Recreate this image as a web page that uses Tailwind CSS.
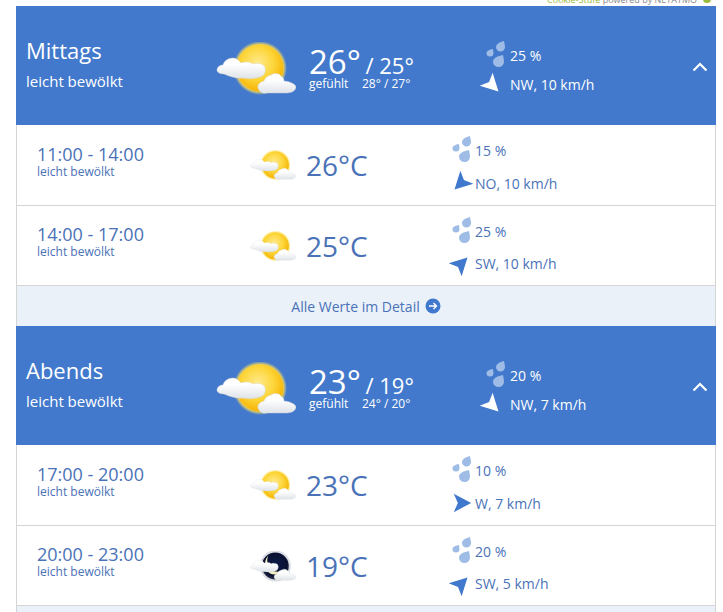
<!DOCTYPE html>
<html lang="de">
<head>
    <meta charset="UTF-8">
    <title>Wetter</title>
    <script src="https://cdn.jsdelivr.net/npm/@tailwindcss/browser@4"></script>
</head>
<body class="bg-white font-['Open_Sans',sans-serif] text-[#4a72b8] w-[723px] h-[612px] overflow-hidden relative">
    <svg width="0" height="0" class="absolute">
        <defs>
            <radialGradient id="sunFill" cx="45%" cy="40%" r="62%">
                <stop offset="0" stop-color="#ffe98f"/>
                <stop offset="0.55" stop-color="#fdd63a"/>
                <stop offset="1" stop-color="#f4b000"/>
            </radialGradient>
            <radialGradient id="sunGlow" cx="50%" cy="50%" r="50%">
                <stop offset="0.86" stop-color="#ffe15a" stop-opacity=".9"/>
                <stop offset="1" stop-color="#ffe15a" stop-opacity="0"/>
            </radialGradient>
            <radialGradient id="moonSky" cx="50%" cy="45%" r="55%">
                <stop offset="0" stop-color="#0c1a4a"/>
                <stop offset="0.8" stop-color="#0a1030"/>
                <stop offset="1" stop-color="#30364d"/>
            </radialGradient>
            <linearGradient id="cloudFill" x1="0" y1="0" x2="0" y2="1">
                <stop offset="0.3" stop-color="#ffffff"/>
                <stop offset="1" stop-color="#dfe3e8"/>
            </linearGradient>
            <symbol id="cloudLeft" viewBox="0 0 80 54">
                <path d="M1 28c0-3 3-5 6-5 1-4 5-7 10-7 3 0 6 2 8 5 5-2 9-1 12 1 4-1 11-1 12 4 1 4-1 8-5 9-6 2-12 2-18 1-6 1-13-2-18-4-3 0-7-1-7-4z" fill="url(#cloudFill)" stroke="#cfd4da" stroke-width=".4"/>
                <path d="M42 46c-1-3 2-6 6-7 1-3 3-5 7-6 3-2 8-2 10 1 2 1 3 3 3 5 4 0 12 3 12 6s-4 6-9 6H51c-4 1-8-1-9-5z" fill="url(#cloudFill)" stroke="#cfd4da" stroke-width=".4"/>
            </symbol>
            <symbol id="cloudSun" viewBox="0 0 80 54">
                <circle cx="44" cy="26" r="27" fill="url(#sunGlow)"/>
                <circle cx="44" cy="26" r="23.500" fill="url(#sunFill)"/>
                <use href="#cloudLeft" width="80" height="54"/>
            </symbol>
            <symbol id="cloudMoon" viewBox="0 0 80 54">
                <circle cx="44" cy="26" r="27" fill="#8c93a8" opacity=".3"/>
                <circle cx="44" cy="26" r="23.500" fill="url(#moonSky)"/>
                <path d="M32 8c-4 8-2 20 7 26 6 3 12 3 17 0-7 10-21 9-27-1-5-8-3-19 3-25z" fill="#f2eec0"/>
                <use href="#cloudLeft" width="80" height="54"/>
            </symbol>
            <symbol id="drops" viewBox="0 0 20 26">
                <path d="M18 0c.5 3 1 4.500 1 6a4.500 4.500 0 0 1-9 0c0-3 4-5 8-6z"/>
                <path d="M7 8c0 2 .5 3 .5 4a3.500 3.500 0 0 1-7 0c0-2 3-3.500 6.500-4z"/>
                <path d="M17 14c.5 3 1 4.500 1 6.500a5.500 5.500 0 0 1-11 0c0-3.500 5-5.500 10-6.500z"/>
            </symbol>
            <symbol id="arrow" viewBox="-12 -12 24 24">
                <path d="M-9 -10L10 0L-9 10L-4.500 0z"/>
            </symbol>
        </defs>
    </svg>

    <p class="absolute right-[26px] -top-[7px] text-[9px] leading-[13px] text-[#8a8a8a] whitespace-nowrap"><span class="text-[#9aba3a]">Cookie-Stufe</span> powered by NETATMO</p>
    <span class="absolute right-[12px] -top-[5px] w-2 h-2 rounded-full bg-[#9aba3a]"></span>

    <main class="w-[700px] ml-4 mt-1.5">
        <!-- Mittags -->
        <section>
            <header class="h-[119px] bg-[#4279cc] text-white flex items-center relative">
                <div class="w-[200px] pl-2.5 -mt-[4px] shrink-0">
                    <h2 class="text-[22px] leading-[28px] mb-[7px]">Mittags</h2>
                    <p class="text-[15px] leading-5">leicht bewölkt</p>
                </div>
                <svg class="w-[80px] h-[54px] mt-[7px] shrink-0"><use href="#cloudSun"/></svg>
                <div class="w-[184px] pl-[13px] shrink-0 mt-[4px]">
                    <p class="text-[33px] leading-[34px] whitespace-nowrap">26° <span class="text-[22px] -ml-[4px]">/ 25°</span></p>
                    <p class="text-[12px] leading-[13px] -mt-[5px] flex"><span class="w-[53px]">gefühlt</span><span>28° / 27°</span></p>
                </div>
                <div class="text-[14px] flex flex-col gap-[5px] mt-[6px] w-[150px]">
                    <p class="grid grid-cols-[30px_1fr] items-center h-[27px]"><svg class="w-[20px] h-[26px] ml-[6px] -mt-[3px] fill-[#9ebce6]"><use href="#drops"/></svg><span>25 %</span></p>
                    <p class="grid grid-cols-[30px_1fr] items-center h-[22px]"><svg class="w-[22px] h-[22px] ml-[1px] fill-white rotate-[45deg]"><use href="#arrow"/></svg><span>NW, 10 km/h</span></p>
                </div>
                <svg class="absolute right-[8px] top-[56px] w-4 h-[10px] stroke-white fill-none" viewBox="0 0 16 10"><path d="M1.500 8.500L8 2l6.500 6.500" stroke-width="2.200"/></svg>
            </header>
            <div class="border-x border-[#d5d5d5]">
                <article class="h-[81px] border-b border-[#d5d5d5] flex items-center">
                    <div class="w-[233px] pl-5 -mt-[8px] shrink-0">
                        <p class="text-[18px] leading-[20px]">11:00 - 14:00</p>
                        <p class="text-[12px] leading-[14px] mt-[1px]">leicht bewölkt</p>
                    </div>
                    <svg class="w-[46px] h-[31px] mt-[1px] shrink-0"><use href="#cloudSun"/></svg>
                    <p class="w-[154px] pl-[10px] text-[28px] leading-8 shrink-0">26°C</p>
                    <div class="text-[14px] mt-[1px]">
                        <p class="grid grid-cols-[25px_1fr] items-center h-[27px] mb-[8px]"><svg class="w-[20px] h-[26px] ml-[2px] -mt-[3px] fill-[#9ebce6]"><use href="#drops"/></svg><span>15 %</span></p>
                        <p class="grid grid-cols-[25px_1fr] items-center h-[22px]"><svg class="w-[22px] h-[22px] fill-[#3f78cc] rotate-[135deg]"><use href="#arrow"/></svg><span>NO, 10 km/h</span></p>
                    </div>
                </article>
                <article class="h-[80px] border-b border-[#d5d5d5] flex items-center">
                    <div class="w-[233px] pl-5 -mt-[8px] shrink-0">
                        <p class="text-[18px] leading-[20px]">14:00 - 17:00</p>
                        <p class="text-[12px] leading-[14px] mt-[1px]">leicht bewölkt</p>
                    </div>
                    <svg class="w-[46px] h-[31px] mt-[1px] shrink-0"><use href="#cloudSun"/></svg>
                    <p class="w-[154px] pl-[10px] text-[28px] leading-8 shrink-0">25°C</p>
                    <div class="text-[14px] mt-[1px]">
                        <p class="grid grid-cols-[25px_1fr] items-center h-[27px] mb-[8px]"><svg class="w-[20px] h-[26px] ml-[2px] -mt-[3px] fill-[#9ebce6]"><use href="#drops"/></svg><span>25 %</span></p>
                        <p class="grid grid-cols-[25px_1fr] items-center h-[22px]"><svg class="w-[22px] h-[22px] fill-[#3f78cc] -rotate-[45deg]"><use href="#arrow"/></svg><span>SW, 10 km/h</span></p>
                    </div>
                </article>
                <a class="h-[40px] bg-[#eaf1f8] flex items-center justify-center gap-[5px] text-[14px]">Alle Werte im Detail
                    <svg class="w-4 h-4" viewBox="0 0 16 16"><circle cx="8" cy="8" r="7.500" fill="#3f78cc"/><path d="M4 8h7.500M8.500 5l3 3-3 3" fill="none" stroke="#fff" stroke-width="1.400"/></svg>
                </a>
            </div>
        </section>
        <!-- Abends -->
        <section>
            <header class="h-[119px] bg-[#4279cc] text-white flex items-center relative">
                <div class="w-[200px] pl-2.5 -mt-[4px] shrink-0">
                    <h2 class="text-[22px] leading-[28px] mb-[7px]">Abends</h2>
                    <p class="text-[15px] leading-5">leicht bewölkt</p>
                </div>
                <svg class="w-[80px] h-[54px] mt-[7px] shrink-0"><use href="#cloudSun"/></svg>
                <div class="w-[184px] pl-[13px] shrink-0 mt-[4px]">
                    <p class="text-[33px] leading-[34px] whitespace-nowrap">23° <span class="text-[22px] -ml-[4px]">/ 19°</span></p>
                    <p class="text-[12px] leading-[13px] -mt-[5px] flex"><span class="w-[53px]">gefühlt</span><span>24° / 20°</span></p>
                </div>
                <div class="text-[14px] flex flex-col gap-[5px] mt-[6px] w-[150px]">
                    <p class="grid grid-cols-[30px_1fr] items-center h-[27px]"><svg class="w-[20px] h-[26px] ml-[6px] -mt-[3px] fill-[#9ebce6]"><use href="#drops"/></svg><span>20 %</span></p>
                    <p class="grid grid-cols-[30px_1fr] items-center h-[22px]"><svg class="w-[22px] h-[22px] ml-[1px] fill-white rotate-[45deg]"><use href="#arrow"/></svg><span>NW, 7 km/h</span></p>
                </div>
                <svg class="absolute right-[8px] top-[56px] w-4 h-[10px] stroke-white fill-none" viewBox="0 0 16 10"><path d="M1.500 8.500L8 2l6.500 6.500" stroke-width="2.200"/></svg>
            </header>
            <div class="border-x border-[#d5d5d5]">
                <article class="h-[81px] border-b border-[#d5d5d5] flex items-center">
                    <div class="w-[233px] pl-5 -mt-[8px] shrink-0">
                        <p class="text-[18px] leading-[20px]">17:00 - 20:00</p>
                        <p class="text-[12px] leading-[14px] mt-[1px]">leicht bewölkt</p>
                    </div>
                    <svg class="w-[46px] h-[31px] mt-[1px] shrink-0"><use href="#cloudSun"/></svg>
                    <p class="w-[154px] pl-[10px] text-[28px] leading-8 shrink-0">23°C</p>
                    <div class="text-[14px] mt-[1px]">
                        <p class="grid grid-cols-[25px_1fr] items-center h-[27px] mb-[8px]"><svg class="w-[20px] h-[26px] ml-[2px] -mt-[3px] fill-[#9ebce6]"><use href="#drops"/></svg><span>10 %</span></p>
                        <p class="grid grid-cols-[25px_1fr] items-center h-[22px]"><svg class="w-[22px] h-[22px] ml-[1px] fill-[#3f78cc]"><use href="#arrow"/></svg><span>W, 7 km/h</span></p>
                    </div>
                </article>
                <article class="h-[80px] border-b border-[#d5d5d5] flex items-center">
                    <div class="w-[233px] pl-5 -mt-[8px] shrink-0">
                        <p class="text-[18px] leading-[20px]">20:00 - 23:00</p>
                        <p class="text-[12px] leading-[14px] mt-[1px]">leicht bewölkt</p>
                    </div>
                    <svg class="w-[46px] h-[31px] mt-[1px] shrink-0"><use href="#cloudMoon"/></svg>
                    <p class="w-[154px] pl-[10px] text-[28px] leading-8 shrink-0">19°C</p>
                    <div class="text-[14px] mt-[1px]">
                        <p class="grid grid-cols-[25px_1fr] items-center h-[27px] mb-[8px]"><svg class="w-[20px] h-[26px] ml-[2px] -mt-[3px] fill-[#9ebce6]"><use href="#drops"/></svg><span>20 %</span></p>
                        <p class="grid grid-cols-[25px_1fr] items-center h-[22px]"><svg class="w-[22px] h-[22px] fill-[#3f78cc] -rotate-[45deg]"><use href="#arrow"/></svg><span>SW, 5 km/h</span></p>
                    </div>
                </article>
                <div class="h-[6px] bg-[#eaf1f8]"></div>
            </div>
        </section>
    </main>
</body>
</html>
